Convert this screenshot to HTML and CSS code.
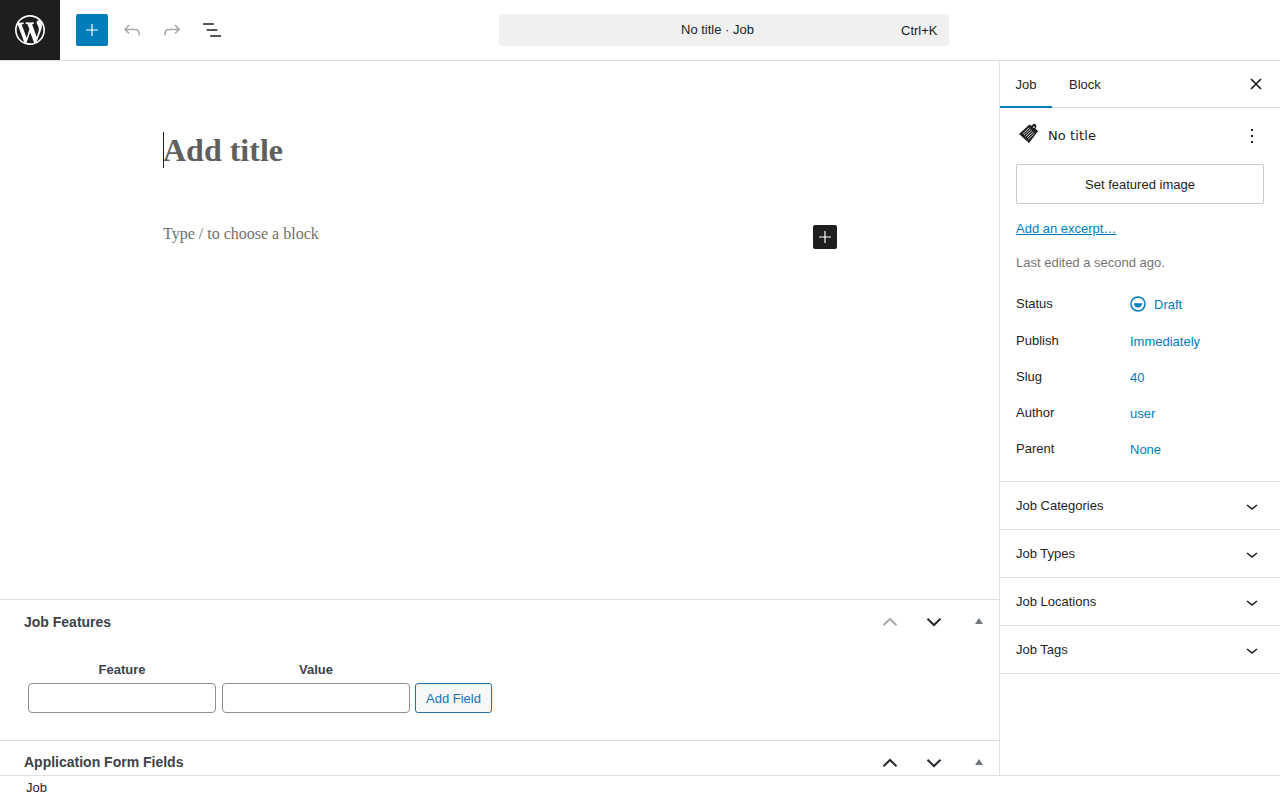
FILE: index.html
```html
<!DOCTYPE html>
<html lang="en">
<head>
<meta charset="utf-8">
<title>Add New Job</title>
<link rel="stylesheet" href="styles.css">
</head>
<body>
<div class="app">
  <header class="topbar">
    <a class="wp-logo"><svg viewBox="-2 -2 24 24" width="36" height="36"><path fill="#fff" d="M20 10c0-5.51-4.49-10-10-10C4.48 0 0 4.49 0 10c0 5.52 4.48 10 10 10 5.51 0 10-4.48 10-10zM7.78 15.37L4.37 6.22c.55-.02 1.17-.08 1.17-.08.5-.06.44-1.13-.06-1.11 0 0-1.45.11-2.37.11-.18 0-.37 0-.58-.01C4.12 2.69 6.87 1.11 10 1.11c2.33 0 4.45.87 6.05 2.34-.68-.11-1.65.39-1.65 1.58 0 .74.45 1.36.9 2.1.35.61.55 1.36.55 2.46 0 1.49-1.4 5-1.4 5l-3.03-8.37c.54-.02.82-.17.82-.17.5-.05.44-1.25-.06-1.22 0 0-1.44.12-2.38.12-.87 0-2.33-.12-2.33-.12-.5-.03-.56 1.2-.06 1.22l.92.08 1.26 3.41zM17.41 10c.24-.64.74-1.87.43-4.25.7 1.29 1.05 2.71 1.05 4.25 0 3.29-1.73 6.24-4.4 7.78.97-2.59 1.94-5.2 2.92-7.78zM6.1 18.09C3.12 16.65 1.11 13.53 1.11 10c0-1.3.23-2.48.72-3.59C3.25 10.3 4.67 14.2 6.1 18.09zm4.03-6.63l2.58 6.98c-.86.29-1.76.45-2.71.45-.79 0-1.57-.11-2.29-.33.81-2.38 1.62-4.74 2.42-7.1z"/></svg></a>
    <div class="tools">
      <button class="inserter"><svg viewBox="0 0 24 24" width="24" height="24"><path fill="#fff" d="M18 11.4h-5.4V6h-1.2v5.4H6v1.2h5.4V18h1.2v-5.4H18z"/></svg></button>
      <button class="tool"><svg viewBox="0 0 24 24" width="24" height="24"><path fill="#a7a7a7" d="M18.3 11.7c-.6-.6-1.4-.9-2.3-.9H6.7l2.9-3.3-1.1-1-4.5 5L8.5 16l1-1-2.7-2.7H16c.5 0 .9.2 1.3.5 1 1 1 3.4 1 4.5v.3h1.5v-.2c0-1.5 0-4.3-1.5-5.7z"/></svg></button>
      <button class="tool"><svg viewBox="0 0 24 24" width="24" height="24"><path fill="#a7a7a7" d="M15.6 6.5l-1.1 1 2.9 3.3H8c-.9 0-1.7.3-2.3.9-1.4 1.5-1.4 4.2-1.4 5.6v.2h1.5v-.3c0-1.1 0-3.5 1-4.5.3-.3.7-.5 1.3-.5h9.2L14.5 15l1.1 1.1 4.6-4.6-4.6-5z"/></svg></button>
      <button class="tool"><svg viewBox="0 0 24 24" width="24" height="24"><path fill="#1e1e1e" d="M13.8 5.2H3v1.5h10.8V5.2zm-3.6 12v1.5H21v-1.5H10.2zm7.2-6H6.6v1.5h10.8v-1.5z"/></svg></button>
    </div>
    <div class="center">
      <div class="command">
        <span class="command-title">No title · Job</span>
        <span class="command-key">Ctrl+K</span>
      </div>
    </div>
  </header>

  <div class="body">
    <main class="editor">
      <div class="canvas">
        <div class="canvas-inner">
          <h1 class="post-title"><span class="caret"></span>Add title</h1>
          <div class="block-row">
            <p class="placeholder">Type / to choose a block</p>
            <button class="block-add"><svg viewBox="0 0 24 24" width="24" height="24"><path fill="#fff" d="M18 11.4h-5.4V6h-1.2v5.4H6v1.2h5.4V18h1.2v-5.4H18z"/></svg></button>
          </div>
        </div>
      </div>
      <section class="metabox">
        <div class="metabox-head">
          <h2>Job Features</h2>
          <div class="metabox-ctrl">
            <span class="ctrl"><svg viewBox="0 0 16 10" width="16" height="10"><path class="chev dim" d="M1.5 8.2 8 2l6.5 6.2"/></svg></span>
            <span class="ctrl"><svg viewBox="0 0 16 10" width="16" height="10"><path class="chev" d="M1.5 1.8 8 8l6.5-6.2"/></svg></span>
            <span class="ctrl"><svg viewBox="0 0 10 8" width="10" height="8"><path fill="#72777c" d="M5 0l4 6H1z"/></svg></span>
          </div>
        </div>
        <div class="metabox-body">
          <div class="field-grid">
            <span class="field-label">Feature</span>
            <span class="field-label">Value</span>
            <span></span>
            <input class="field-input" type="text">
            <input class="field-input" type="text">
            <button class="add-field">Add Field</button>
          </div>
        </div>
      </section>
      <section class="metabox metabox-last">
        <div class="metabox-head">
          <h2>Application Form Fields</h2>
          <div class="metabox-ctrl">
            <span class="ctrl"><svg viewBox="0 0 16 10" width="16" height="10"><path class="chev" d="M1.5 8.2 8 2l6.5 6.2"/></svg></span>
            <span class="ctrl"><svg viewBox="0 0 16 10" width="16" height="10"><path class="chev" d="M1.5 1.8 8 8l6.5-6.2"/></svg></span>
            <span class="ctrl"><svg viewBox="0 0 10 8" width="10" height="8"><path fill="#72777c" d="M5 0l4 6H1z"/></svg></span>
          </div>
        </div>
      </section>
    </main>

    <aside class="sidebar">
      <div class="tabs">
        <button class="tab active">Job</button>
        <button class="tab">Block</button>
        <button class="close"><svg viewBox="0 0 24 24" width="24" height="24"><path fill="none" stroke="#1e1e1e" stroke-width="1.7" d="M7 7l10 10M17 7 7 17"/></svg></button>
      </div>
      <div class="summary">
        <div class="post-card">
          <svg class="tag" viewBox="0 0 24 24" width="24" height="24"><path fill="#1e1e1e" d="M3 12 13.5 2.5l1.6 1.3 1.3-.9a2.2 2.2 0 0 1 3.6 2.7l-.6 1 2.6 2.6L13 21z"/><path stroke="#fff" stroke-width=".8" fill="none" d="M6.8 11.8l6.4-6M8 13.2l6.6-6.2M9.4 14.6l6.6-6.2M10.8 16l6.4-6M12.2 17.4l6.2-6"/><circle cx="17.9" cy="5.1" r=".9" fill="#fff"/></svg>
          <span class="post-name">No title</span>
          <svg class="more" viewBox="0 0 24 24" width="24" height="24"><path fill="#1e1e1e" d="M13 19h-2v-2h2v2zm0-6h-2v-2h2v2zm0-6h-2V5h2v2z"/></svg>
        </div>
        <button class="featured">Set featured image</button>
        <a class="excerpt">Add an excerpt…</a>
        <p class="edited">Last edited a second ago.</p>
        <dl class="props">
          <div class="prop"><dt>Status</dt><dd><svg class="status-ic" viewBox="0 0 16 16" width="16" height="16"><circle cx="8" cy="8" r="7" fill="none" stroke="#007cba" stroke-width="1.5"/><path fill="#007cba" d="M3.8 7.2h8.4A4.2 4.2 0 0 1 8 11.4a4.2 4.2 0 0 1-4.2-4.2z"/></svg>Draft</dd></div>
          <div class="prop"><dt>Publish</dt><dd>Immediately</dd></div>
          <div class="prop"><dt>Slug</dt><dd>40</dd></div>
          <div class="prop"><dt>Author</dt><dd>user</dd></div>
          <div class="prop"><dt>Parent</dt><dd>None</dd></div>
        </dl>
      </div>
      <div class="panel"><span>Job Categories</span><svg viewBox="0 0 24 24" width="24" height="24"><path fill="#1e1e1e" d="M17.5 11.6L12 16l-5.5-4.4.9-1.2L12 14l4.5-3.6 1 1.2z"/></svg></div>
      <div class="panel"><span>Job Types</span><svg viewBox="0 0 24 24" width="24" height="24"><path fill="#1e1e1e" d="M17.5 11.6L12 16l-5.5-4.4.9-1.2L12 14l4.5-3.6 1 1.2z"/></svg></div>
      <div class="panel"><span>Job Locations</span><svg viewBox="0 0 24 24" width="24" height="24"><path fill="#1e1e1e" d="M17.5 11.6L12 16l-5.5-4.4.9-1.2L12 14l4.5-3.6 1 1.2z"/></svg></div>
      <div class="panel"><span>Job Tags</span><svg viewBox="0 0 24 24" width="24" height="24"><path fill="#1e1e1e" d="M17.5 11.6L12 16l-5.5-4.4.9-1.2L12 14l4.5-3.6 1 1.2z"/></svg></div>
    </aside>
  </div>

  <footer class="footer">Job</footer>
</div>
</body>
</html>
```
FILE: styles.css
```css
* { box-sizing: border-box; }
html, body { margin: 0; height: 100%; overflow: hidden; background: #fff; }
body { font-family: "Liberation Sans", Arial, sans-serif; font-size: 13px; color: #1e1e1e; }
button { font: inherit; color: inherit; background: none; border: 0; padding: 0; }

.app { height: 800px; display: flex; flex-direction: column; }

.topbar { height: 61px; flex: none; display: flex; align-items: center; border-bottom: 1px solid #e0e0e0; position: relative; }
.wp-logo { width: 60px; height: 60px; background: #1e1e1e; display: flex; align-items: center; justify-content: center; flex: none; }
.tools { display: flex; align-items: center; margin-left: 16px; gap: 8px; }
.inserter { width: 32px; height: 32px; background: #007cba; border-radius: 2px; display: flex; align-items: center; justify-content: center; }
.tool { width: 32px; height: 32px; display: flex; align-items: center; justify-content: center; }
.center { flex: 1; display: flex; justify-content: center; padding-right: 61px; }
.command { width: 450px; height: 32px; background: #f0f0f0; border-radius: 4px; display: flex; align-items: center; position: relative; justify-content: center; padding-right: 12px; }
.command-title { color: #1e1e1e; line-height: 32px; }
.command-key { position: absolute; right: 11px; top: 0; line-height: 34px; color: #1e1e1e; }

.body { flex: 1; min-height: 0; display: flex; }
.editor { width: 1000px; flex: none; border-right: 1px solid #e0e0e0; display: flex; flex-direction: column; overflow: hidden; }
.canvas { height: 538px; flex: none; padding-top: 70px; }
.canvas-inner { width: 674px; margin: 0 auto 0 163px; }
.post-title { margin: 0; font-family: "Liberation Serif", "Times New Roman", serif; font-size: 32px; font-weight: 700; line-height: 38px; color: #5f5f5f; position: relative; height: 40px; }
.caret { position: absolute; left: 0; top: 1px; width: 1px; height: 36px; background: #1e1e1e; }
.block-row { display: flex; justify-content: space-between; margin-top: 52px; }
.placeholder { margin: 0; font-family: "Liberation Serif", "Times New Roman", serif; font-size: 16px; line-height: 24px; color: #707070; position: relative; top: -1px; }
.block-add { width: 24px; height: 24px; background: #1e1e1e; border-radius: 2px; display: flex; align-items: center; justify-content: center; margin-top: 2px; }

.metabox { border-top: 1px solid #e0e0e0; flex: none; height: 141px; }
.metabox-last { height: 60px; }
.metabox-head { height: 44px; display: flex; align-items: center; justify-content: space-between; padding-left: 24px; }
.metabox-head h2 { margin: 0; font-size: 14px; font-weight: 700; line-height: 44px; color: #3c434a; }
.metabox-last h2 { margin-bottom: 2px; }
.metabox-ctrl { display: flex; align-items: center; }
.ctrl { width: 44px; height: 44px; display: flex; align-items: center; justify-content: center; }
.ctrl:last-child { width: 40px; margin-left: 3px; }
.chev { fill: none; stroke: #23282d; stroke-width: 2; }
.chev.dim { stroke: #a7aaad; }

.metabox-body { padding: 16px 0 0 25px; }
.field-grid { display: inline-grid; grid-template-columns: 194px 194px auto; align-items: center; }
.field-label { font-weight: 700; font-size: 13px; line-height: 19px; color: #3c434a; text-align: center; margin-bottom: 4px; }
.field-input { width: 188px; height: 30px; margin: 0 3px; border: 1px solid #8c8f94; border-radius: 4px; background: #fff; }
.add-field { height: 30px; padding: 0 10px; margin-left: 2px; border: 1px solid #2271b1; border-radius: 3px; background: #f6f7f7; color: #2271b1; white-space: nowrap; }

.sidebar { width: 280px; flex: none; display: flex; flex-direction: column; overflow: hidden; }
.tabs { height: 47px; flex: none; display: flex; align-items: stretch; border-bottom: 1px solid #e0e0e0; position: relative; }
.tab { height: 47px; padding: 0 16px; line-height: 47px; }
.tab:nth-child(1) { width: 52px; padding: 0; }
.tab:nth-child(2) { padding-left: 17px; }
.tab.active { box-shadow: inset 0 -2px 0 #007cba; }
.close { position: absolute; right: 12px; top: 11px; width: 24px; height: 24px; }
.close svg { display: block; }

.summary { padding: 16px; border-bottom: 1px solid #e0e0e0; height: 374px; flex: none; }
.post-card { display: flex; align-items: center; height: 24px; margin-bottom: 16px; }
.tag { flex: none; margin-bottom: 4px; }
.post-name { margin-left: 8px; font-family: "DejaVu Sans", sans-serif; font-size: 13px; flex: 1; color: #1e1e1e; letter-spacing: .1px; margin-bottom: 2px; }
.more { flex: none; }
.featured { width: 100%; height: 40px; border: 1px solid #ccc; border-radius: 2px; display: block; background: #fff; }
.excerpt { display: block; margin-top: 17px; line-height: 16px; color: #007cba; text-decoration: underline; }
.edited { margin: 18px 0 0; line-height: 16px; color: #757575; }
.props { margin: 25px 0 0; }
.prop { display: flex; align-items: flex-start; height: 36px; }
.prop dt { width: 114px; line-height: 16px; color: #1e1e1e; }
.prop dd { margin: 0; line-height: 16px; color: #007cba; display: flex; align-items: center; position: relative; top: 1px; }
.prop:first-child { height: 37px; }
.status-ic { margin: -2px 8px 0 0; }

.panel { height: 48px; flex: none; display: flex; align-items: center; justify-content: space-between; padding: 0 16px; border-bottom: 1px solid #e0e0e0; }
.panel span { line-height: 48px; }
.panel svg { flex: none; }

.footer { height: 25px; flex: none; border-top: 1px solid #e0e0e0; padding-left: 26px; line-height: 24px; background: #fff; }
```
